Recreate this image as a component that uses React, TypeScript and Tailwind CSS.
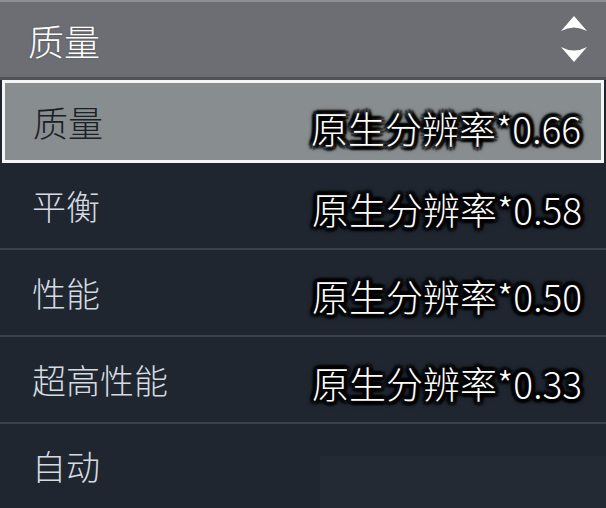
import React from 'react';

const outline =
  '[text-shadow:0_0_2px_#000,4px_0_2px_#000,-4px_0_2px_#000,0_4px_2px_#000,0_-4px_2px_#000,3px_3px_2px_#000,-3px_3px_2px_#000,3px_-3px_2px_#000,-3px_-3px_2px_#000,0_0_7px_#000]';

const rows = [
  { label: '平衡', value: '原生分辨率*0.58' },
  { label: '性能', value: '原生分辨率*0.50' },
  { label: '超高性能', value: '原生分辨率*0.33' },
  { label: '自动', value: '' },
];

function Arrows() {
  return (
    <svg width="28" height="48" viewBox="0 0 28 48" className="block">
      <path d="M14 0 L27 15 Q14 8 1 15 Z" fill="#fff" />
      <path d="M1 31 Q14 38 27 31 L14 46 Z" fill="#fff" />
    </svg>
  );
}

export default function App() {
  return (
    <div className="w-[606px] h-[508px] overflow-hidden bg-[#1f2630] font-['Noto_Sans_CJK_SC','Noto_Sans',sans-serif] flex flex-col">
      <div className="h-[77px] shrink-0 bg-[#6d6e73] border-t-2 border-[#8d8e93] flex items-center justify-between pl-[28px] pr-[18px]">
        <span className="text-[36px] leading-none text-white font-light [text-shadow:0_0_2px_rgba(0,0,0,0.3)]">质量</span>
        <Arrows />
      </div>
      <div className="h-[3px] shrink-0 bg-[#4f5156]" />
      <div className="h-[83px] shrink-0 mx-[2px] border-[3px] border-[#f4f6f6] bg-[#888d8f] flex items-center justify-between pl-[28px] pr-[20px]">
        <span className="text-[35px] leading-none font-light text-[#1b2024]">质量</span>
        <span className={`mt-[14px] text-[37px] leading-none font-light text-white ${outline}`}>原生分辨率*0.66</span>
      </div>
      {rows.map((r, i) => (
        <div
          key={r.label}
          className={`relative flex items-center justify-between pl-[32px] pr-[24px] ${i < rows.length - 1 ? 'h-[87px] border-b-2 border-[#38414c]' : 'flex-1'}`}
        >
          {i === rows.length - 1 && (
            <div className="absolute right-0 bottom-0 w-[286px] h-[52px] bg-[#232a33]" />
          )}
          <span className="relative text-[34px] leading-none font-light text-[#d6dbe0]">{r.label}</span>
          {r.value && (
            <span className={`mt-[8px] text-[37px] leading-none font-light text-white ${outline}`}>{r.value}</span>
          )}
        </div>
      ))}
    </div>
  );
}
